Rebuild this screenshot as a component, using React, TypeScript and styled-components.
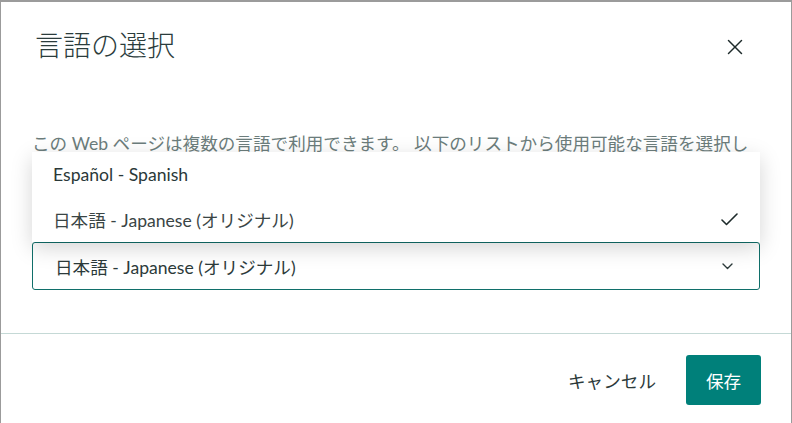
import * as React from 'react'
import styled, { createGlobalStyle } from 'styled-components'

const GlobalStyle = createGlobalStyle`
  html, body {
    margin: 0;
    padding: 0;
    background: #9b9b9b;
    overflow: hidden;
  }
  body {
    font-family: Lato, "Noto Sans CJK JP", sans-serif;
  }
`

const Dialog = styled.div`
  margin: 2px 0 0 1px;
  width: 790px;
  min-height: 440px;
  background: #fff;
  box-sizing: border-box;
`

const Header = styled.header`
  display: flex;
  justify-content: space-between;
  align-items: flex-start;
  padding: 23px 36px 0 34px;
`

const Title = styled.h2`
  margin: 0;
  font-size: 28px;
  line-height: 40px;
  font-weight: 300;
  color: #2b3c3c;
`

const CloseButton = styled.button`
  width: 40px;
  height: 40px;
  margin-top: 2px;
  display: flex;
  align-items: center;
  justify-content: center;
  background: none;
  border: none;
  padding: 0;
  color: #1e2b2b;
  cursor: pointer;
`

const Body = styled.div`
  padding: 0 31px 43px;
`

const Intro = styled.p`
  margin: 64px 0 0;
  font-size: 17.6px;
  line-height: 26px;
  color: #6c7d7c;
`

const Field = styled.div`
  position: relative;
  margin-top: 59px;
`

const SelectBox = styled.div`
  height: 48px;
  box-sizing: border-box;
  border: 1px solid #106f6a;
  border-radius: 3px;
  padding: 0 26px 0 22px;
  display: flex;
  align-items: center;
  justify-content: space-between;
  font-size: 17.6px;
  color: #2c3a3a;
`

const Menu = styled.ul`
  position: absolute;
  left: 0;
  right: 0;
  bottom: 100%;
  margin: 0;
  padding: 0;
  list-style: none;
  background: #fff;
  box-shadow: 0 6px 20px rgba(0, 0, 0, 0.17);
  z-index: 2;
`

const Option = styled.li<{ $selected?: boolean }>`
  height: 45px;
  display: flex;
  align-items: center;
  justify-content: space-between;
  padding: 0 22px 0 21px;
  font-size: 17.6px;
  color: ${p => (p.$selected ? '#3a4545' : '#2a3838')};
`

const Footer = styled.footer`
  border-top: 1px solid #c5d9d6;
  padding: 21px 30px 20px;
  display: flex;
  justify-content: flex-end;
  gap: 14px;
`

const Button = styled.button<{ $primary?: boolean }>`
  height: 50px;
  padding: 0 16px;
  border: none;
  border-radius: 3px;
  font-family: inherit;
  font-size: 17.6px;
  background: ${p => (p.$primary ? '#00807a' : 'transparent')};
  color: ${p => (p.$primary ? '#fff' : '#2c3a3a')};
  min-width: ${p => (p.$primary ? '75px' : 'auto')};
  cursor: pointer;
`

const CloseIcon = () => (
  <svg width="16" height="16" viewBox="0 0 16 16" fill="none" stroke="currentColor" strokeWidth="1.5" strokeLinecap="round">
    <line x1="1.5" y1="1.5" x2="14.5" y2="14.5" />
    <line x1="14.5" y1="1.5" x2="1.5" y2="14.5" />
  </svg>
)

const CheckIcon = () => (
  <svg width="17" height="13" viewBox="0 0 17 13" fill="none" stroke="#1e2b2b" strokeWidth="1.6" strokeLinecap="round" strokeLinejoin="round">
    <polyline points="1,7 5.5,11.5 16,1" />
  </svg>
)

const ChevronIcon = () => (
  <svg width="11" height="7" viewBox="0 0 11 7" fill="none" stroke="#2c3a3a" strokeWidth="1.4" strokeLinecap="round" strokeLinejoin="round">
    <polyline points="1,1 5.5,5.5 10,1" />
  </svg>
)

const languages = [
  { id: 'es', label: 'Español - Spanish' },
  { id: 'ja', label: '日本語 - Japanese (オリジナル)' },
]

export default function App() {
  const selected = 'ja'
  const current = languages.find(l => l.id === selected)

  return (
    <>
      <GlobalStyle />
      <Dialog>
        <Header>
          <Title>言語の選択</Title>
          <CloseButton aria-label="閉じる"><CloseIcon /></CloseButton>
        </Header>
        <Body>
          <Intro>この Web ページは複数の言語で利用できます。 以下のリストから使用可能な言語を選択してください。</Intro>
          <Field>
            <Menu>
              {languages.map(l => (
                <Option key={l.id} $selected={l.id === selected}>
                  <span>{l.label}</span>
                  {l.id === selected && <CheckIcon />}
                </Option>
              ))}
            </Menu>
            <SelectBox>
              <span>{current?.label}</span>
              <ChevronIcon />
            </SelectBox>
          </Field>
        </Body>
        <Footer>
          <Button>キャンセル</Button>
          <Button $primary>保存</Button>
        </Footer>
      </Dialog>
    </>
  )
}
